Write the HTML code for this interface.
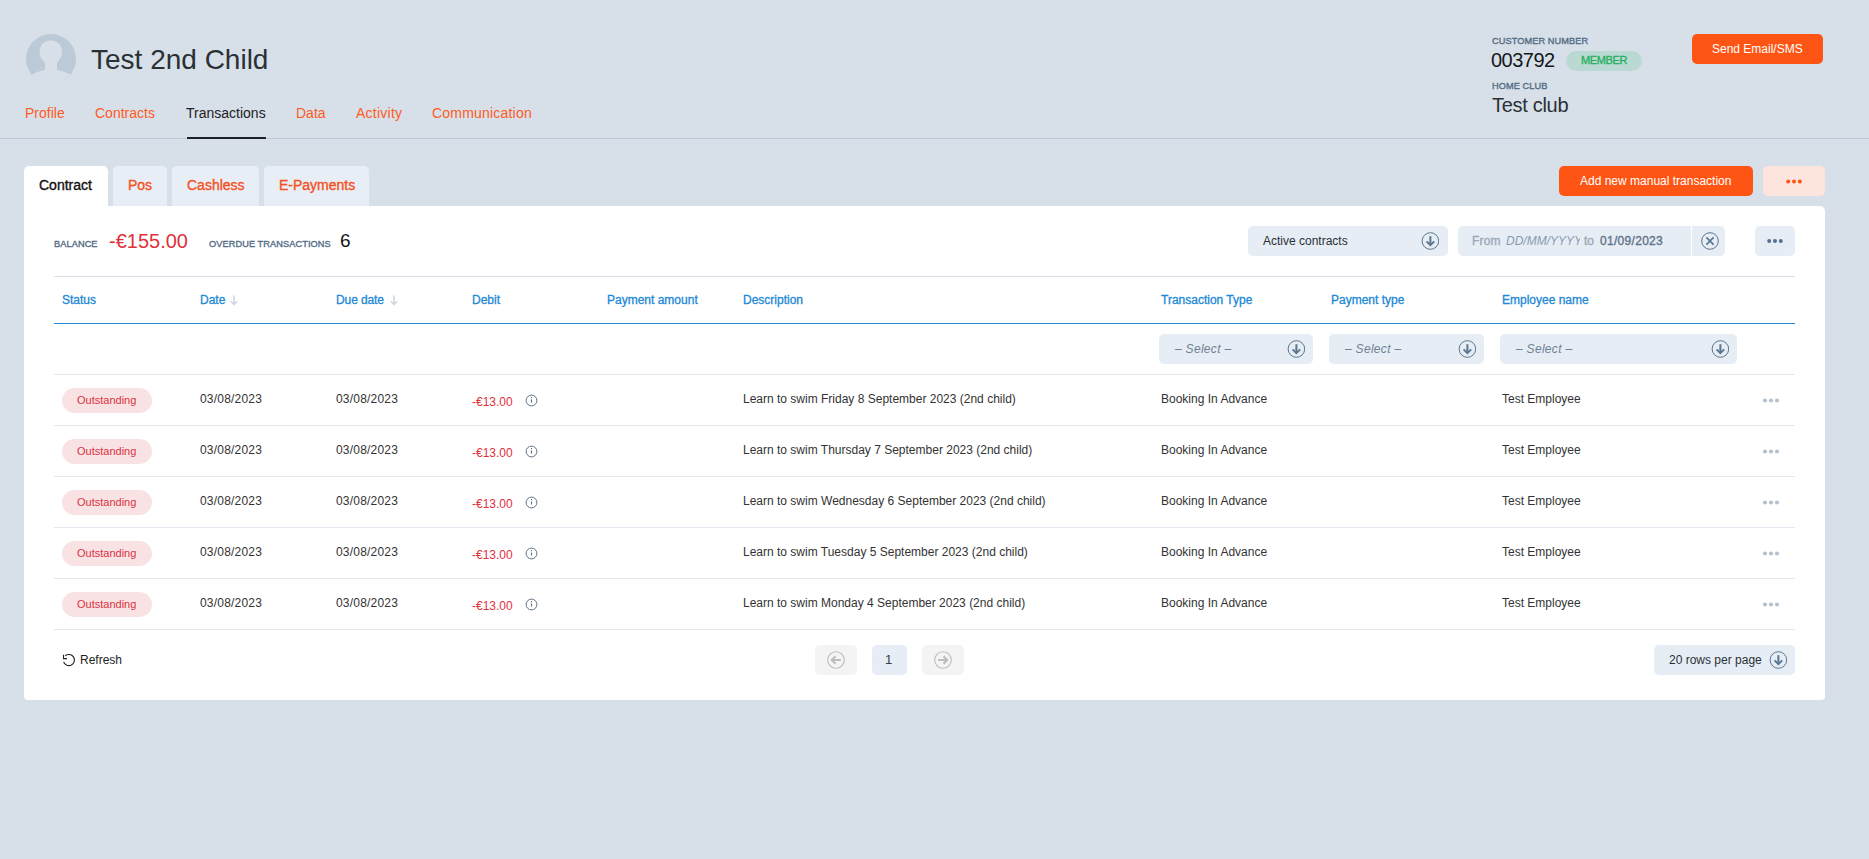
<!DOCTYPE html>
<html><head><meta charset="utf-8">
<style>
*{margin:0;padding:0;box-sizing:border-box}
html,body{width:1869px;height:859px;overflow:hidden;background:#d7e0e9;font-family:"Liberation Sans",sans-serif;position:relative}
.t{position:absolute;white-space:nowrap;line-height:1}
.b{position:absolute}
.nav{font-size:14px;color:#ff5a22;top:106px}
.stab{position:absolute;top:166px;height:40px;background:#e8eef5;border-radius:5px 5px 0 0}
.stab span{position:absolute;top:12px;font-size:14px;font-weight:400;-webkit-text-stroke:0.35px currentColor;letter-spacing:0px;color:#f5511e;line-height:1}
.card{position:absolute;left:24px;top:206px;width:1801px;height:494px;background:#fff;border-radius:0 5px 4px 4px}
.lbl{font-size:9.2px;font-weight:400;-webkit-text-stroke:0.35px currentColor;color:#536c85;letter-spacing:0.1px}
.th{font-size:12px;font-weight:400;-webkit-text-stroke:0.3px currentColor;color:#2088d5;top:294px;letter-spacing:0px}
.sel{position:absolute;top:334px;height:30px;background:#e6edf5;border-radius:5px}
.sel span{position:absolute;left:16px;top:9px;font-size:12px;font-style:italic;letter-spacing:0.3px;color:#6f8295;line-height:1}
.sel svg{position:absolute;top:6px}
.hl{position:absolute;left:54px;width:1741px;height:1px;background:#e1e8ef}
.badge{position:absolute;left:62px;width:90px;height:25px;border-radius:13px;background:#f9e2e4}
.badge span{position:absolute;left:15px;top:7px;font-size:11px;color:#d9323f;line-height:1}
.cell{font-size:12px;color:#333}
.deb{font-size:12px;color:#e0303e}
.dots{position:absolute;width:16px;height:5px}
</style></head><body>
<!-- avatar -->
<svg class="b" style="left:26px;top:34px" width="50" height="50" viewBox="0 0 50 50">
<defs><clipPath id="av"><circle cx="25" cy="25" r="25"/></clipPath></defs>
<circle cx="25" cy="25" r="25" fill="#bccad7"/>
<g clip-path="url(#av)" fill="#d7e0e9">
<path d="M24.8 6.6C31 6.6 36 11 36 17.5C36 22.5 33.5 26 31 28.5L31 36L19 36L19 28.5C16.3 26 13.6 22.5 13.6 17.5C13.6 11 18.6 6.6 24.8 6.6Z"/>

<path d="M0 43 Q10 37.5 20 35.5 L30 35.5 Q40 37.5 50 43 L50 50 L0 50 Z"/>
</g>
</svg>
<div class="t" style="left:91px;top:46px;font-size:28px;color:#2b3035">Test 2nd Child</div>

<!-- nav -->
<div class="t nav" style="left:25px">Profile</div>
<div class="t nav" style="left:95px">Contracts</div>
<div class="t nav" style="left:186px;color:#1d2024">Transactions</div>
<div class="t nav" style="left:296px">Data</div>
<div class="t nav" style="left:356px;letter-spacing:0.25px">Activity</div>
<div class="t nav" style="left:432px;letter-spacing:0.2px">Communication</div>
<div class="b" style="left:0;top:138px;width:1869px;height:1px;background:#bccad7"></div>
<div class="b" style="left:187px;top:137px;width:79px;height:2px;background:#1d2024"></div>

<!-- right header -->
<div class="t lbl" style="left:1492px;top:37px">CUSTOMER NUMBER</div>
<div class="t" style="left:1491px;top:50px;font-size:20px;color:#15181b;letter-spacing:-0.5px">003792</div>
<div class="b" style="left:1566px;top:51px;width:76px;height:20px;border-radius:10px;background:#bad9d2"></div>
<div class="t" style="left:1581px;top:55px;font-size:11px;font-weight:400;-webkit-text-stroke:0.3px currentColor;color:#1fae5a;letter-spacing:-0.35px">MEMBER</div>
<div class="t lbl" style="left:1492px;top:82px">HOME CLUB</div>
<div class="t" style="left:1492px;top:95px;font-size:20px;color:#2b3035;letter-spacing:-0.3px">Test club</div>
<div class="b" style="left:1692px;top:34px;width:131px;height:30px;border-radius:5px;background:#ff5514"></div>
<div class="t" style="left:1712px;top:43px;font-size:12px;color:#fff">Send Email/SMS</div>

<!-- sub tabs -->
<div class="stab" style="left:24px;width:84px;background:#fff"><span style="left:15px;color:#111">Contract</span></div>
<div class="stab" style="left:113px;width:54px"><span style="left:15px">Pos</span></div>
<div class="stab" style="left:172px;width:87px"><span style="left:15px">Cashless</span></div>
<div class="stab" style="left:264px;width:105px"><span style="left:15px">E-Payments</span></div>
<div class="b" style="left:1559px;top:166px;width:194px;height:30px;border-radius:5px;background:#ff5514"></div>
<div class="t" style="left:1580px;top:175px;font-size:12px;color:#fff">Add new manual transaction</div>
<div class="b" style="left:1763px;top:166px;width:62px;height:30px;border-radius:5px;background:#fde4dd"></div>
<svg class="b" style="left:1786px;top:179px" width="16" height="5"><circle cx="2.2" cy="2.5" r="2" fill="#fc5417"/><circle cx="8" cy="2.5" r="2" fill="#fc5417"/><circle cx="13.8" cy="2.5" r="2" fill="#fc5417"/></svg>

<!-- card -->
<div class="card"></div>
<div class="t lbl" style="left:54px;top:240px">BALANCE</div>
<div class="t" style="left:109px;top:231px;font-size:20px;color:#e0313b">-€155.00</div>
<div class="t lbl" style="left:209px;top:240px">OVERDUE TRANSACTIONS</div>
<div class="t" style="left:340px;top:231px;font-size:19px;color:#15181b">6</div>
<div class="b" style="left:1248px;top:226px;width:200px;height:30px;border-radius:5px;background:#e6edf5"></div>
<div class="t" style="left:1263px;top:235px;font-size:12px;color:#2b3035">Active contracts</div>
<svg class="b" style="left:1421px;top:232px" width="18" height="18" viewBox="0 0 18 18"><circle cx="9.4" cy="9" r="8.3" fill="none" stroke="#5b7690" stroke-width="1"/><path d="M9.4 4.2V13" stroke="#5b7690" stroke-width="2" fill="none"/><path d="M5.6 9.4L9.4 13.2L13.2 9.4" stroke="#5b7690" stroke-width="2" fill="none"/></svg>
<div class="b" style="left:1458px;top:226px;width:267px;height:30px;border-radius:5px;background:#e6edf5"></div>
<div class="b" style="left:1691px;top:226px;width:1px;height:30px;background:#fff"></div>
<div class="t" style="left:1472px;top:235px;font-size:12px;font-weight:400;-webkit-text-stroke:0.35px currentColor;color:#9aa9b8;letter-spacing:0.2px">From</div>
<div class="b" style="left:1505px;top:230px;width:75px;height:20px;overflow:hidden"><div class="t" style="left:1px;top:5px;font-size:12px;font-style:italic;color:#8a9bb0">DD/MM/YYYY</div></div>
<div class="t" style="left:1584px;top:235px;font-size:12px;font-weight:400;-webkit-text-stroke:0.35px currentColor;color:#9aa9b8">to</div>
<div class="t" style="left:1600px;top:235px;font-size:12px;font-weight:400;-webkit-text-stroke:0.35px currentColor;color:#5f7389;letter-spacing:0.3px">01/09/2023</div>
<svg class="b" style="left:1701px;top:232px" width="18" height="18" viewBox="0 0 18 18"><circle cx="9" cy="9" r="8.3" fill="none" stroke="#5b7690" stroke-width="1"/><path d="M5.4 5.4L12.6 12.6M12.6 5.4L5.4 12.6" stroke="#5b7690" stroke-width="1.7" fill="none"/></svg>
<div class="b" style="left:1755px;top:226px;width:40px;height:30px;border-radius:5px;background:#e6edf5"></div>
<svg class="b" style="left:1767px;top:238px" width="16" height="6"><circle cx="2.2" cy="3" r="2" fill="#567190"/><circle cx="8" cy="3" r="2" fill="#567190"/><circle cx="13.8" cy="3" r="2" fill="#567190"/></svg>
<div class="hl" style="top:276px;background:#d8e1ea"></div>
<div class="t th" style="left:62px">Status</div>
<div class="t th" style="left:200px">Date</div>
<div class="t th" style="left:336px;letter-spacing:-0.1px">Due date</div>
<div class="t th" style="left:472px">Debit</div>
<div class="t th" style="left:607px">Payment amount</div>
<div class="t th" style="left:743px">Description</div>
<div class="t th" style="left:1161px">Transaction Type</div>
<div class="t th" style="left:1331px">Payment type</div>
<div class="t th" style="left:1502px">Employee name</div>
<svg class="b" style="left:229px;top:294px" width="10" height="12" viewBox="0 0 10 12"><path d="M5 1.5V10.5M1.8 7.3L5 10.5L8.2 7.3" stroke="#ccd6e0" stroke-width="1.5" fill="none"/></svg>
<svg class="b" style="left:389px;top:294px" width="10" height="12" viewBox="0 0 10 12"><path d="M5 1.5V10.5M1.8 7.3L5 10.5L8.2 7.3" stroke="#ccd6e0" stroke-width="1.5" fill="none"/></svg>
<div class="hl" style="top:323px;height:1px;background:#2088d5"></div>
<div class="sel" style="left:1159px;width:154px"><span>– Select –</span></div>
<svg class="b" style="left:1287px;top:340px" width="18" height="18" viewBox="0 0 18 18"><circle cx="9.4" cy="9" r="8.3" fill="none" stroke="#5b7690" stroke-width="1"/><path d="M9.4 4.2V13" stroke="#5b7690" stroke-width="2" fill="none"/><path d="M5.6 9.4L9.4 13.2L13.2 9.4" stroke="#5b7690" stroke-width="2" fill="none"/></svg>
<div class="sel" style="left:1329px;width:155px"><span>– Select –</span></div>
<svg class="b" style="left:1458px;top:340px" width="18" height="18" viewBox="0 0 18 18"><circle cx="9.4" cy="9" r="8.3" fill="none" stroke="#5b7690" stroke-width="1"/><path d="M9.4 4.2V13" stroke="#5b7690" stroke-width="2" fill="none"/><path d="M5.6 9.4L9.4 13.2L13.2 9.4" stroke="#5b7690" stroke-width="2" fill="none"/></svg>
<div class="sel" style="left:1500px;width:237px"><span>– Select –</span></div>
<svg class="b" style="left:1711px;top:340px" width="18" height="18" viewBox="0 0 18 18"><circle cx="9.4" cy="9" r="8.3" fill="none" stroke="#5b7690" stroke-width="1"/><path d="M9.4 4.2V13" stroke="#5b7690" stroke-width="2" fill="none"/><path d="M5.6 9.4L9.4 13.2L13.2 9.4" stroke="#5b7690" stroke-width="2" fill="none"/></svg>
<div class="hl" style="top:374px"></div>
<div class="badge" style="top:388px"><span>Outstanding</span></div>
<div class="t cell" style="letter-spacing:0.2px;left:200px;top:393px">03/08/2023</div>
<div class="t cell" style="letter-spacing:0.2px;left:336px;top:393px">03/08/2023</div>
<div class="t deb" style="left:472px;top:396px">-€13.00</div>
<svg class="b" style="left:525px;top:394px" width="13" height="13" viewBox="0 0 13 13"><circle cx="6.5" cy="6.5" r="5.4" fill="none" stroke="#5a6f85" stroke-width="1"/><path d="M6.5 2.9V4.2M6.5 5.4V8.6" stroke="#5a6f85" stroke-width="1.1"/></svg>
<div class="t cell" style="left:743px;top:393px">Learn to swim Friday 8 September 2023 (2nd child)</div>
<div class="t cell" style="left:1161px;top:393px">Booking In Advance</div>
<div class="t cell" style="left:1502px;top:393px">Test Employee</div>
<svg class="b" style="left:1762px;top:398px" width="18" height="5"><circle cx="3" cy="2.5" r="2.1" fill="#b4c2d0"/><circle cx="9" cy="2.5" r="2.1" fill="#b4c2d0"/><circle cx="15" cy="2.5" r="2.1" fill="#b4c2d0"/></svg>
<div class="hl" style="top:425px"></div>
<div class="badge" style="top:439px"><span>Outstanding</span></div>
<div class="t cell" style="letter-spacing:0.2px;left:200px;top:444px">03/08/2023</div>
<div class="t cell" style="letter-spacing:0.2px;left:336px;top:444px">03/08/2023</div>
<div class="t deb" style="left:472px;top:447px">-€13.00</div>
<svg class="b" style="left:525px;top:445px" width="13" height="13" viewBox="0 0 13 13"><circle cx="6.5" cy="6.5" r="5.4" fill="none" stroke="#5a6f85" stroke-width="1"/><path d="M6.5 2.9V4.2M6.5 5.4V8.6" stroke="#5a6f85" stroke-width="1.1"/></svg>
<div class="t cell" style="left:743px;top:444px">Learn to swim Thursday 7 September 2023 (2nd child)</div>
<div class="t cell" style="left:1161px;top:444px">Booking In Advance</div>
<div class="t cell" style="left:1502px;top:444px">Test Employee</div>
<svg class="b" style="left:1762px;top:449px" width="18" height="5"><circle cx="3" cy="2.5" r="2.1" fill="#b4c2d0"/><circle cx="9" cy="2.5" r="2.1" fill="#b4c2d0"/><circle cx="15" cy="2.5" r="2.1" fill="#b4c2d0"/></svg>
<div class="hl" style="top:476px"></div>
<div class="badge" style="top:490px"><span>Outstanding</span></div>
<div class="t cell" style="letter-spacing:0.2px;left:200px;top:495px">03/08/2023</div>
<div class="t cell" style="letter-spacing:0.2px;left:336px;top:495px">03/08/2023</div>
<div class="t deb" style="left:472px;top:498px">-€13.00</div>
<svg class="b" style="left:525px;top:496px" width="13" height="13" viewBox="0 0 13 13"><circle cx="6.5" cy="6.5" r="5.4" fill="none" stroke="#5a6f85" stroke-width="1"/><path d="M6.5 2.9V4.2M6.5 5.4V8.6" stroke="#5a6f85" stroke-width="1.1"/></svg>
<div class="t cell" style="left:743px;top:495px">Learn to swim Wednesday 6 September 2023 (2nd child)</div>
<div class="t cell" style="left:1161px;top:495px">Booking In Advance</div>
<div class="t cell" style="left:1502px;top:495px">Test Employee</div>
<svg class="b" style="left:1762px;top:500px" width="18" height="5"><circle cx="3" cy="2.5" r="2.1" fill="#b4c2d0"/><circle cx="9" cy="2.5" r="2.1" fill="#b4c2d0"/><circle cx="15" cy="2.5" r="2.1" fill="#b4c2d0"/></svg>
<div class="hl" style="top:527px"></div>
<div class="badge" style="top:541px"><span>Outstanding</span></div>
<div class="t cell" style="letter-spacing:0.2px;left:200px;top:546px">03/08/2023</div>
<div class="t cell" style="letter-spacing:0.2px;left:336px;top:546px">03/08/2023</div>
<div class="t deb" style="left:472px;top:549px">-€13.00</div>
<svg class="b" style="left:525px;top:547px" width="13" height="13" viewBox="0 0 13 13"><circle cx="6.5" cy="6.5" r="5.4" fill="none" stroke="#5a6f85" stroke-width="1"/><path d="M6.5 2.9V4.2M6.5 5.4V8.6" stroke="#5a6f85" stroke-width="1.1"/></svg>
<div class="t cell" style="left:743px;top:546px">Learn to swim Tuesday 5 September 2023 (2nd child)</div>
<div class="t cell" style="left:1161px;top:546px">Booking In Advance</div>
<div class="t cell" style="left:1502px;top:546px">Test Employee</div>
<svg class="b" style="left:1762px;top:551px" width="18" height="5"><circle cx="3" cy="2.5" r="2.1" fill="#b4c2d0"/><circle cx="9" cy="2.5" r="2.1" fill="#b4c2d0"/><circle cx="15" cy="2.5" r="2.1" fill="#b4c2d0"/></svg>
<div class="hl" style="top:578px"></div>
<div class="badge" style="top:592px"><span>Outstanding</span></div>
<div class="t cell" style="letter-spacing:0.2px;left:200px;top:597px">03/08/2023</div>
<div class="t cell" style="letter-spacing:0.2px;left:336px;top:597px">03/08/2023</div>
<div class="t deb" style="left:472px;top:600px">-€13.00</div>
<svg class="b" style="left:525px;top:598px" width="13" height="13" viewBox="0 0 13 13"><circle cx="6.5" cy="6.5" r="5.4" fill="none" stroke="#5a6f85" stroke-width="1"/><path d="M6.5 2.9V4.2M6.5 5.4V8.6" stroke="#5a6f85" stroke-width="1.1"/></svg>
<div class="t cell" style="left:743px;top:597px">Learn to swim Monday 4 September 2023 (2nd child)</div>
<div class="t cell" style="left:1161px;top:597px">Booking In Advance</div>
<div class="t cell" style="left:1502px;top:597px">Test Employee</div>
<svg class="b" style="left:1762px;top:602px" width="18" height="5"><circle cx="3" cy="2.5" r="2.1" fill="#b4c2d0"/><circle cx="9" cy="2.5" r="2.1" fill="#b4c2d0"/><circle cx="15" cy="2.5" r="2.1" fill="#b4c2d0"/></svg>
<div class="hl" style="top:629px"></div>
<svg class="b" style="left:62px;top:653px" width="14" height="14" viewBox="0 0 14 14"><path d="M3.2 2.8A5.6 5.6 0 1 1 1.6 9" stroke="#222" stroke-width="1.1" fill="none"/><path d="M1.5 1.8V5.6H5" stroke="#222" stroke-width="1.1" fill="none"/></svg>
<div class="t" style="left:80px;top:654px;font-size:12px;color:#222">Refresh</div>
<div class="b" style="left:815px;top:645px;width:42px;height:30px;border-radius:5px;background:#f4f4f4"></div>
<svg class="b" style="left:827px;top:651px" width="18" height="18" viewBox="0 0 18 18"><circle cx="9" cy="9" r="8.3" fill="none" stroke="#bdbdbd" stroke-width="1.1"/><path d="M13.8 9H5M8.5 5.2L4.7 9L8.5 12.8" stroke="#bdbdbd" stroke-width="2" fill="none"/></svg>
<div class="b" style="left:872px;top:645px;width:35px;height:30px;border-radius:5px;background:#e6edf5"></div>
<div class="t" style="left:885px;top:653px;font-size:13px;color:#2c3e50">1</div>
<div class="b" style="left:922px;top:645px;width:42px;height:30px;border-radius:5px;background:#f4f4f4"></div>
<svg class="b" style="left:934px;top:651px" width="18" height="18" viewBox="0 0 18 18"><circle cx="9" cy="9" r="8.3" fill="none" stroke="#bdbdbd" stroke-width="1.1"/><path d="M4.2 9H13M9.5 5.2L13.3 9L9.5 12.8" stroke="#bdbdbd" stroke-width="2" fill="none"/></svg>
<div class="b" style="left:1654px;top:645px;width:141px;height:30px;border-radius:5px;background:#e6edf5"></div>
<div class="t" style="left:1669px;top:654px;font-size:12px;color:#2b3035">20 rows per page</div>
<svg class="b" style="left:1769px;top:651px" width="18" height="18" viewBox="0 0 18 18"><circle cx="9.4" cy="9" r="8.3" fill="none" stroke="#5b7690" stroke-width="1"/><path d="M9.4 4.2V13" stroke="#5b7690" stroke-width="2" fill="none"/><path d="M5.6 9.4L9.4 13.2L13.2 9.4" stroke="#5b7690" stroke-width="2" fill="none"/></svg>
</body></html>
